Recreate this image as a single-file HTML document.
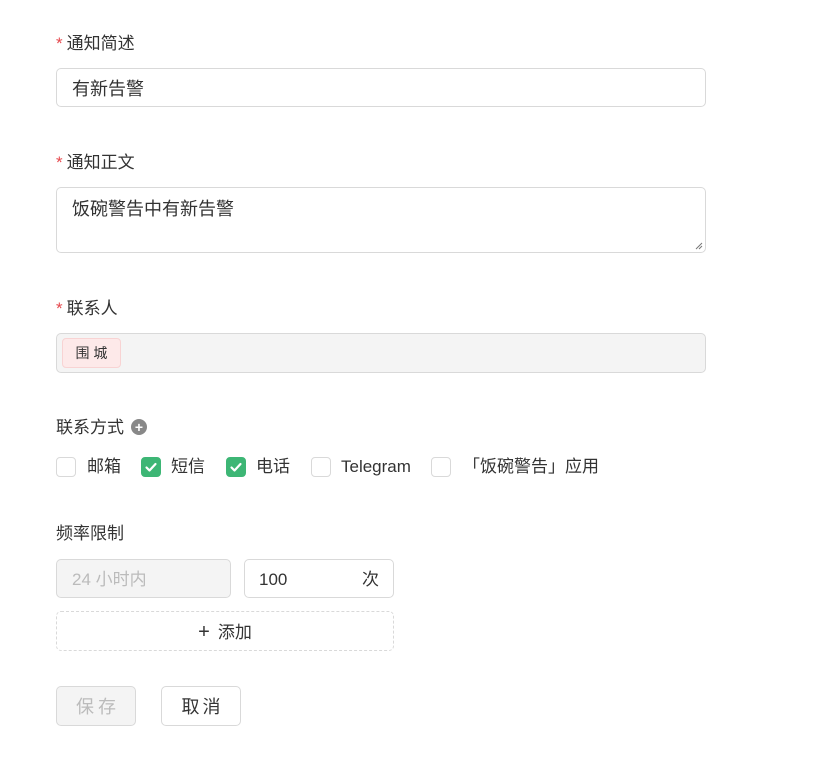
<!DOCTYPE html>
<html><head><meta charset="utf-8"><style>
*{box-sizing:border-box;margin:0;padding:0}
body{width:817px;height:760px;background:#fff;font-family:"Liberation Sans","Noto Sans CJK SC",sans-serif;color:#333;font-size:17px;position:relative;overflow:hidden}
.a{position:absolute}
.lbl{font-size:17px;line-height:20px;color:#333}
.req{color:#e5484d;margin-right:4px}
.box{border:1px solid #d9d9d9;border-radius:5px;background:#fff}
.cb{width:20px;height:20px;border:1px solid #d9d9d9;border-radius:4px;background:#fff;display:inline-block;vertical-align:middle}
.cb.on{background:#3db675;border-color:#3db675}
.opt{position:absolute;top:457px;height:20px;line-height:20px;font-size:17px}
.opt span.t{position:absolute;top:0;white-space:nowrap}
</style></head><body>
<div class="a lbl" style="left:56px;top:34px"><span class="req">*</span>通知简述</div>
<div class="a box" style="left:56px;top:68px;width:650px;height:39px;padding:0 15px;line-height:40px;font-size:18px">有新告警</div>

<div class="a lbl" style="left:56px;top:153px"><span class="req">*</span>通知正文</div>
<div class="a box" style="left:56px;top:187px;width:650px;height:66px;padding:10px 15px;font-size:18px;line-height:22px">饭碗警告中有新告警
<svg class="a" style="right:2px;bottom:2px" width="8" height="8"><path d="M1 7L7 1M4 7L7 4" stroke="#777" stroke-width="1"/></svg></div>

<div class="a lbl" style="left:56px;top:299px"><span class="req">*</span>联系人</div>
<div class="a box" style="left:56px;top:333px;width:650px;height:40px;background:#f4f4f4"></div>
<div class="a" style="left:62px;top:338px;width:59px;height:30px;background:#fde9e9;border:1px solid #f8d3d3;border-radius:4px;font-size:14px;line-height:28px;text-align:center;color:#333">围 城</div>

<div class="a lbl" style="left:56px;top:418px">联系方式</div>
<div class="a" style="left:131px;top:419px;width:16px;height:16px;border-radius:50%;background:#888;color:#fff;font-size:14px;line-height:16px;text-align:center;font-weight:bold">+</div>

<div class="opt" style="left:56px"><span class="cb a"></span><span class="t" style="left:31px">邮箱</span></div>
<div class="opt" style="left:141px"><span class="cb on a" style="left:0"><svg width="18" height="18"><path d="M4.5 9.5L7.5 12.5L13.5 6" stroke="#fff" stroke-width="2.2" fill="none" stroke-linecap="round" stroke-linejoin="round"/></svg></span><span class="t" style="left:30px">短信</span></div>
<div class="opt" style="left:226px"><span class="cb on a" style="left:0"><svg width="18" height="18"><path d="M4.5 9.5L7.5 12.5L13.5 6" stroke="#fff" stroke-width="2.2" fill="none" stroke-linecap="round" stroke-linejoin="round"/></svg></span><span class="t" style="left:30px">电话</span></div>
<div class="opt" style="left:311px"><span class="cb a"></span><span class="t" style="left:30px">Telegram</span></div>
<div class="opt" style="left:431px"><span class="cb a"></span><span class="t" style="left:32px">「饭碗警告」应用</span></div>

<div class="a lbl" style="left:56px;top:524px">频率限制</div>
<div class="a box" style="left:56px;top:559px;width:175px;height:39px;background:#f4f4f4;color:#bbb;padding-left:15px;line-height:40px">24 小时内</div>
<div class="a box" style="left:244px;top:559px;width:150px;height:39px;padding:0 14px;line-height:40px"><span>100</span><span style="float:right">次</span></div>
<div class="a" style="left:56px;top:611px;width:338px;height:40px;border:1px dashed #d9d9d9;border-radius:5px;text-align:center;line-height:40px"><span style="font-size:20px;margin-right:8px">+</span>添加</div>

<div class="a box" style="left:56px;top:686px;width:80px;height:40px;background:#f4f4f4;color:#bbb;text-align:center;line-height:40px;letter-spacing:4px;padding-left:4px;font-size:18px">保存</div>
<div class="a box" style="left:161px;top:686px;width:80px;height:40px;text-align:center;line-height:40px;letter-spacing:3px;padding-left:3px;font-size:18px">取消</div>
</body></html>
